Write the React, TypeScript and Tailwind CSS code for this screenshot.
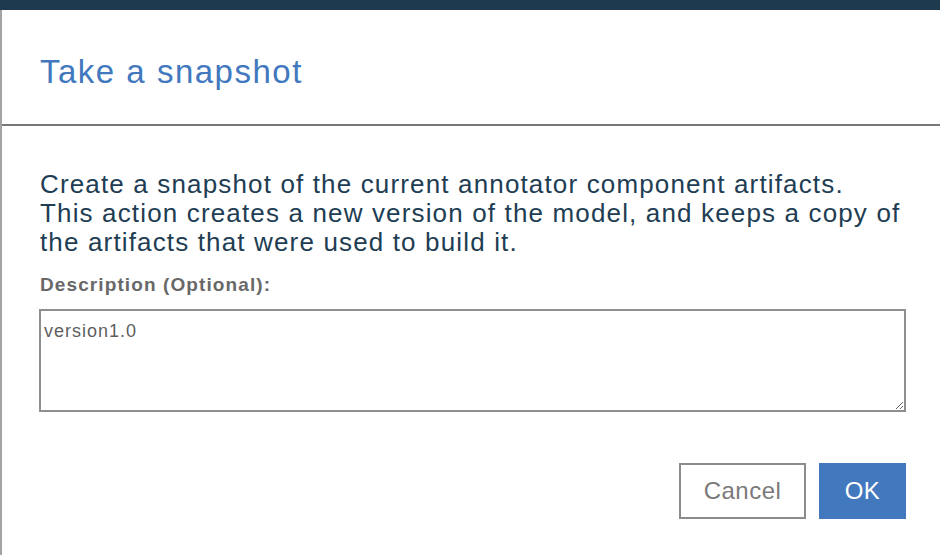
import React from 'react';

const App = () => {
  return (
    <div className="w-[940px] h-[555px] bg-white flex flex-col overflow-hidden font-['Liberation_Sans',Arial,sans-serif]">
      <div className="h-[10px] bg-[#1e3a4f] shrink-0" />
      <div className="flex-1 flex flex-col border-l-2 border-[#a3a3a3]">
        {/* header */}
        <div className="h-[116px] shrink-0 pl-[38px] pt-[45px] border-b-2 border-[#777777]">
          <h1 className="text-[33px] leading-none tracking-[1.5px] text-[#4178be]">Take a snapshot</h1>
        </div>

        {/* body */}
        <div className="pl-[37px] pt-[44px]">
          <p className="pl-[1px] text-[26px] leading-[29px] tracking-[1.15px] text-[#213d53] whitespace-nowrap">
            Create a snapshot of the current annotator component artifacts.
            <br />
            This action creates a new version of the model, and keeps a copy of
            <br />
            the artifacts that were used to build it.
          </p>
          <label className="block pl-[1px] mt-[18px] text-[19px] leading-none font-bold tracking-[1.1px] text-[#686868]">
            Description (Optional):
          </label>
          <textarea
            className="mt-[15px] block w-[867px] h-[103px] border-2 border-[#8f8f8f] px-[3px] pt-[7px] text-[18px] tracking-[1px] text-[#5e5e5e] outline-none resize"
            defaultValue="version1.0"
          />
          <div className="flex justify-end gap-[13px] mt-[51px] w-[867px]">
            <button className="w-[127px] h-[56px] border-2 border-[#8c8c8c] bg-white text-[24px] tracking-[0.5px] text-[#7a7a7a]">
              Cancel
            </button>
            <button className="w-[87px] h-[56px] bg-[#4178be] text-[24px] tracking-[0.5px] text-white">
              OK
            </button>
          </div>
        </div>
      </div>
    </div>
  );
};

export default App;
